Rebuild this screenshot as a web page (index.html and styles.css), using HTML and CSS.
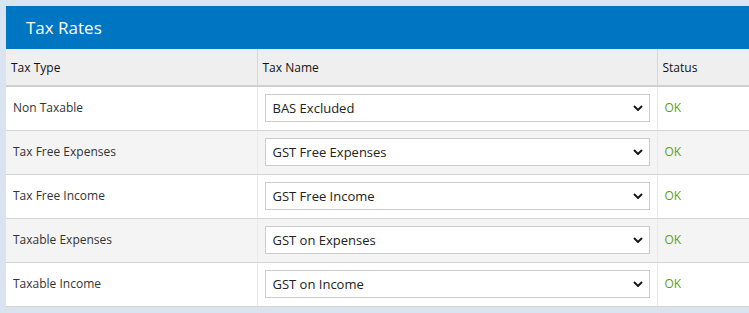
FILE: index.html
```html
<!DOCTYPE html>
<html lang="en">
<head>
    <meta charset="UTF-8">
    <meta name="viewport" content="width=device-width, initial-scale=1.0">
    <title>Tax Rates</title>
    <link rel="stylesheet" href="styles.css">
</head>
<body>
    <div class="panel">
        <header class="panel-title">Tax Rates</header>
        <table class="rates">
            <thead>
                <tr>
                    <th class="col-type">Tax Type</th>
                    <th class="col-name">Tax Name</th>
                    <th class="col-status">Status</th>
                </tr>
            </thead>
            <tbody>
                <tr>
                    <td>Non Taxable</td>
                    <td>
                        <div class="pick">
                            <select><option>BAS Excluded</option></select>
                            <svg class="chev" width="10" height="6" viewBox="0 0 10 6"><path d="M1 1l4 4 4-4" fill="none" stroke="#1a1a1a" stroke-width="2"/></svg>
                        </div>
                    </td>
                    <td class="ok">OK</td>
                </tr>
                <tr>
                    <td>Tax Free Expenses</td>
                    <td>
                        <div class="pick">
                            <select><option>GST Free Expenses</option></select>
                            <svg class="chev" width="10" height="6" viewBox="0 0 10 6"><path d="M1 1l4 4 4-4" fill="none" stroke="#1a1a1a" stroke-width="2"/></svg>
                        </div>
                    </td>
                    <td class="ok">OK</td>
                </tr>
                <tr>
                    <td>Tax Free Income</td>
                    <td>
                        <div class="pick">
                            <select><option>GST Free Income</option></select>
                            <svg class="chev" width="10" height="6" viewBox="0 0 10 6"><path d="M1 1l4 4 4-4" fill="none" stroke="#1a1a1a" stroke-width="2"/></svg>
                        </div>
                    </td>
                    <td class="ok">OK</td>
                </tr>
                <tr>
                    <td>Taxable Expenses</td>
                    <td>
                        <div class="pick">
                            <select><option>GST on Expenses</option></select>
                            <svg class="chev" width="10" height="6" viewBox="0 0 10 6"><path d="M1 1l4 4 4-4" fill="none" stroke="#1a1a1a" stroke-width="2"/></svg>
                        </div>
                    </td>
                    <td class="ok">OK</td>
                </tr>
                <tr>
                    <td>Taxable Income</td>
                    <td>
                        <div class="pick">
                            <select><option>GST on Income</option></select>
                            <svg class="chev" width="10" height="6" viewBox="0 0 10 6"><path d="M1 1l4 4 4-4" fill="none" stroke="#1a1a1a" stroke-width="2"/></svg>
                        </div>
                    </td>
                    <td class="ok">OK</td>
                </tr>
            </tbody>
        </table>
    </div>
</body>
</html>
```

FILE: styles.css
```css
* {
    margin: 0;
    padding: 0;
    box-sizing: border-box;
}

body {
    background-color: #dae3f0;
    font-family: 'Open Sans', 'Noto Sans', sans-serif;
    color: #333;
    overflow: hidden;
    padding: 6px 0 0 6px;
}

.panel {
    width: 743px;
    background-color: #fff;
}

.panel-title {
    background-color: #0075c2;
    color: white;
    height: 43px;
    padding: 0 20px;
    font-size: 17px;
    line-height: 43px;
}

.rates {
    width: 100%;
    border-collapse: collapse;
    table-layout: fixed;
}

.col-type {
    width: 251px;
}

.col-name {
    width: 400px;
}

.rates th {
    background-color: #efefef;
    height: 37px;
    font-weight: normal;
    font-size: 12px;
    color: #111;
    text-align: left;
    padding: 0 5px;
    border-bottom: 2px solid #cfcfcf;
    border-left: 1px solid #d6d6d6;
}

.rates th:first-child,
.rates td:first-child {
    border-left: none;
}

.rates td {
    height: 44px;
    font-size: 12px;
    padding: 0 7px 1px;
    border-bottom: 1px solid #d3d3d3;
    border-left: 1px solid #e9e9f7;
}

.rates td:first-child {
    padding-left: 7px;
}

.rates tbody tr:nth-child(even) td {
    background-color: #f4f4f4;
}

.pick {
    position: relative;
    width: 385px;
}

.pick select {
    appearance: none;
    -webkit-appearance: none;
    width: 100%;
    height: 28px;
    border: 1px solid #cccccc;
    background-color: #fff;
    font-family: 'Open Sans', 'Noto Sans', sans-serif;
    font-size: 13px;
    color: #222;
    padding: 0 7px;
    border-radius: 0;
}

.chev {
    position: absolute;
    right: 7px;
    top: 11px;
}

.ok {
    color: #5f9e1e;
}
```
